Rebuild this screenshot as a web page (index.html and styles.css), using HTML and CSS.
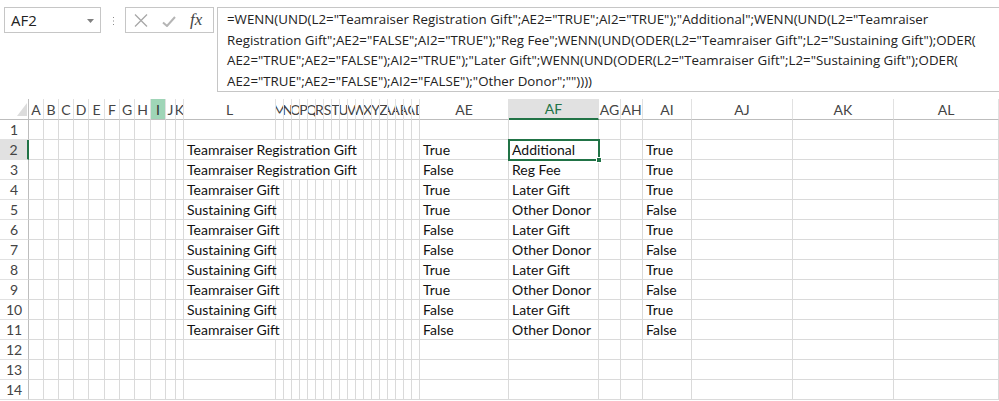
FILE: index.html
```html
<!DOCTYPE html>
<html><head><meta charset="utf-8"><title>Sheet</title><link rel="stylesheet" href="styles.css"></head>
<body>
<div class="fbar">
  <div class="namebox"><span>AF2</span><svg class="dd" width="7" height="4" viewBox="0 0 7 4"><path d="M0 0h7L3.5 4z" fill="#808080"/></svg></div>
  <svg class="dots" width="3" height="10" viewBox="0 0 3 10"><rect x="1" y="1" width="1" height="1" fill="#8a8a8a"/><rect x="1" y="4.5" width="1" height="1" fill="#8a8a8a"/><rect x="1" y="8" width="1" height="1" fill="#8a8a8a"/></svg>
  <div class="btns">
    <svg class="bx" width="14" height="13" viewBox="0 0 14 13"><path d="M1 0.5L13 12.5M13 0.5L1 12.5" stroke="#a8a8a8" stroke-width="1.3" fill="none"/></svg>
    <svg class="bc" width="14" height="11" viewBox="0 0 14 11"><path d="M1 6.5L5 10L13 1" stroke="#b5b5b5" stroke-width="2" fill="none"/></svg>
    <span class="fx">fx</span>
  </div>
  <div class="formula">
    <div>=WENN(UND(L2="Teamraiser Registration Gift";AE2="TRUE";AI2="TRUE");"Additional";WENN(UND(L2="Teamraiser</div>
    <div>Registration Gift";AE2="FALSE";AI2="TRUE");"Reg Fee";WENN(UND(ODER(L2="Teamraiser Gift";L2="Sustaining Gift");ODER(</div>
    <div>AE2="TRUE";AE2="FALSE");AI2="TRUE");"Later Gift";WENN(UND(ODER(L2="Teamraiser Gift";L2="Sustaining Gift");ODER(</div>
    <div>AE2="TRUE";AE2="FALSE");AI2="FALSE");"Other Donor";""))))</div>
  </div>
</div>
<table class="sheet">
<colgroup>
<col class="w29"><col class="w15"><col class="w15"><col class="w15"><col class="w15"><col class="w16"><col class="w15"><col class="w15"><col class="w16"><col class="w15"><col class="w10"><col class="w8"><col class="w92">
<col class="w8"><col class="w8"><col class="w8"><col class="w8"><col class="w8"><col class="w8"><col class="w8"><col class="w8"><col class="w8"><col class="w8"><col class="w8"><col class="w8"><col class="w8"><col class="w8"><col class="w8"><col class="w8"><col class="w8"><col class="w8">
<col class="w89"><col class="w90"><col class="w22"><col class="w22"><col class="w49"><col class="w101"><col class="w101"><col class="w105">
</colgroup>
<thead>
<tr class="hdr"><th class="corner"><svg class="tri" width="10" height="13" viewBox="0 0 10 13"><path d="M10 0V13H0z" fill="#dcdcdc"/></svg></th>
<th class="ch">A</th><th class="ch">B</th><th class="ch">C</th><th class="ch">D</th><th class="ch">E</th><th class="ch">F</th><th class="ch">G</th><th class="ch">H</th><th class="ch hi">I</th><th class="ch">J</th><th class="ch"><div class="clip">K</div></th><th class="ch">L</th>
<th class="ch"><div class="clip">M</div></th><th class="ch"><div class="clip">N</div></th><th class="ch"><div class="clip">O</div></th><th class="ch"><div class="clip">P</div></th><th class="ch"><div class="clip">Q</div></th><th class="ch"><div class="clip">R</div></th><th class="ch"><div class="clip">S</div></th><th class="ch"><div class="clip">T</div></th><th class="ch"><div class="clip">U</div></th><th class="ch"><div class="clip">V</div></th><th class="ch"><div class="clip">W</div></th><th class="ch"><div class="clip">X</div></th><th class="ch"><div class="clip">Y</div></th><th class="ch"><div class="clip">Z</div></th><th class="ch"><div class="clip">AA</div></th><th class="ch"><div class="clip">AB</div></th><th class="ch"><div class="clip">AC</div></th><th class="ch"><div class="clip">AD</div></th>
<th class="ch">AE</th><th class="ch sel">AF</th><th class="ch">AG</th><th class="ch">AH</th><th class="ch">AI</th><th class="ch">AJ</th><th class="ch">AK</th><th class="ch">AL</th></tr>
</thead>
<tbody>
<tr><th class="rh">1</th><td></td><td></td><td></td><td></td><td></td><td></td><td></td><td></td><td></td><td></td><td></td><td></td><td></td><td></td><td></td><td></td><td></td><td></td><td></td><td></td><td></td><td></td><td></td><td></td><td></td><td></td><td></td><td></td><td></td><td></td><td></td><td></td><td></td><td></td><td></td><td></td><td></td><td></td></tr>
<tr><th class="rh on">2</th><td></td><td></td><td></td><td></td><td></td><td></td><td></td><td></td><td></td><td></td><td></td><td class="t" colspan="12">Teamraiser Registration Gift</td><td></td><td></td><td></td><td></td><td></td><td></td><td></td><td class="t">True</td><td class="t cur">Additional<div class="selbox"></div><div class="handle"></div></td><td></td><td></td><td class="t">True</td><td></td><td></td><td></td></tr>
<tr><th class="rh">3</th><td></td><td></td><td></td><td></td><td></td><td></td><td></td><td></td><td></td><td></td><td></td><td class="t" colspan="12">Teamraiser Registration Gift</td><td></td><td></td><td></td><td></td><td></td><td></td><td></td><td class="t">False</td><td class="t">Reg Fee</td><td></td><td></td><td class="t">True</td><td></td><td></td><td></td></tr>
<tr><th class="rh">4</th><td></td><td></td><td></td><td></td><td></td><td></td><td></td><td></td><td></td><td></td><td></td><td class="t" colspan="2">Teamraiser Gift</td><td></td><td></td><td></td><td></td><td></td><td></td><td></td><td></td><td></td><td></td><td></td><td></td><td></td><td></td><td></td><td></td><td></td><td class="t">True</td><td class="t">Later Gift</td><td></td><td></td><td class="t">True</td><td></td><td></td><td></td></tr>
<tr><th class="rh">5</th><td></td><td></td><td></td><td></td><td></td><td></td><td></td><td></td><td></td><td></td><td></td><td class="t">Sustaining Gift</td><td></td><td></td><td></td><td></td><td></td><td></td><td></td><td></td><td></td><td></td><td></td><td></td><td></td><td></td><td></td><td></td><td></td><td></td><td class="t">True</td><td class="t">Other Donor</td><td></td><td></td><td class="t">False</td><td></td><td></td><td></td></tr>
<tr><th class="rh">6</th><td></td><td></td><td></td><td></td><td></td><td></td><td></td><td></td><td></td><td></td><td></td><td class="t" colspan="2">Teamraiser Gift</td><td></td><td></td><td></td><td></td><td></td><td></td><td></td><td></td><td></td><td></td><td></td><td></td><td></td><td></td><td></td><td></td><td></td><td class="t">False</td><td class="t">Later Gift</td><td></td><td></td><td class="t">True</td><td></td><td></td><td></td></tr>
<tr><th class="rh">7</th><td></td><td></td><td></td><td></td><td></td><td></td><td></td><td></td><td></td><td></td><td></td><td class="t">Sustaining Gift</td><td></td><td></td><td></td><td></td><td></td><td></td><td></td><td></td><td></td><td></td><td></td><td></td><td></td><td></td><td></td><td></td><td></td><td></td><td class="t">False</td><td class="t">Other Donor</td><td></td><td></td><td class="t">False</td><td></td><td></td><td></td></tr>
<tr><th class="rh">8</th><td></td><td></td><td></td><td></td><td></td><td></td><td></td><td></td><td></td><td></td><td></td><td class="t">Sustaining Gift</td><td></td><td></td><td></td><td></td><td></td><td></td><td></td><td></td><td></td><td></td><td></td><td></td><td></td><td></td><td></td><td></td><td></td><td></td><td class="t">True</td><td class="t">Later Gift</td><td></td><td></td><td class="t">True</td><td></td><td></td><td></td></tr>
<tr><th class="rh">9</th><td></td><td></td><td></td><td></td><td></td><td></td><td></td><td></td><td></td><td></td><td></td><td class="t" colspan="2">Teamraiser Gift</td><td></td><td></td><td></td><td></td><td></td><td></td><td></td><td></td><td></td><td></td><td></td><td></td><td></td><td></td><td></td><td></td><td></td><td class="t">True</td><td class="t">Other Donor</td><td></td><td></td><td class="t">False</td><td></td><td></td><td></td></tr>
<tr><th class="rh">10</th><td></td><td></td><td></td><td></td><td></td><td></td><td></td><td></td><td></td><td></td><td></td><td class="t">Sustaining Gift</td><td></td><td></td><td></td><td></td><td></td><td></td><td></td><td></td><td></td><td></td><td></td><td></td><td></td><td></td><td></td><td></td><td></td><td></td><td class="t">False</td><td class="t">Later Gift</td><td></td><td></td><td class="t">True</td><td></td><td></td><td></td></tr>
<tr><th class="rh">11</th><td></td><td></td><td></td><td></td><td></td><td></td><td></td><td></td><td></td><td></td><td></td><td class="t" colspan="2">Teamraiser Gift</td><td></td><td></td><td></td><td></td><td></td><td></td><td></td><td></td><td></td><td></td><td></td><td></td><td></td><td></td><td></td><td></td><td></td><td class="t">False</td><td class="t">Other Donor</td><td></td><td></td><td class="t">False</td><td></td><td></td><td></td></tr>
<tr><th class="rh">12</th><td></td><td></td><td></td><td></td><td></td><td></td><td></td><td></td><td></td><td></td><td></td><td></td><td></td><td></td><td></td><td></td><td></td><td></td><td></td><td></td><td></td><td></td><td></td><td></td><td></td><td></td><td></td><td></td><td></td><td></td><td></td><td></td><td></td><td></td><td></td><td></td><td></td><td></td></tr>
<tr><th class="rh">13</th><td></td><td></td><td></td><td></td><td></td><td></td><td></td><td></td><td></td><td></td><td></td><td></td><td></td><td></td><td></td><td></td><td></td><td></td><td></td><td></td><td></td><td></td><td></td><td></td><td></td><td></td><td></td><td></td><td></td><td></td><td></td><td></td><td></td><td></td><td></td><td></td><td></td><td></td></tr>
<tr><th class="rh">14</th><td></td><td></td><td></td><td></td><td></td><td></td><td></td><td></td><td></td><td></td><td></td><td></td><td></td><td></td><td></td><td></td><td></td><td></td><td></td><td></td><td></td><td></td><td></td><td></td><td></td><td></td><td></td><td></td><td></td><td></td><td></td><td></td><td></td><td></td><td></td><td></td><td></td><td></td></tr>
</tbody>
</table>
</body></html>
```
FILE: styles.css
```css
* { box-sizing: border-box; }
html, body { margin: 0; background: #fff; }
body { width: 999px; height: 401px; overflow: hidden; font-family: Lato, "Liberation Sans", sans-serif; color: #111; }

.fbar { display: flex; align-items: flex-start; height: 99px; padding-top: 7px; }
.namebox { margin-left: 4px; width: 97px; height: 26px; border: 1px solid #c6c6c6; display: flex; align-items: center; justify-content: space-between; padding: 0 6px 0 6px; font-family: "Open Sans", sans-serif; font-size: 15px; color: #222; }
.dd { margin-top: 1px; }
.dots { margin: 9px 0 0 11px; }
.btns { margin-left: 10px; width: 89px; height: 26px; border: 1px solid #c6c6c6; display: flex; align-items: center; padding-left: 8px; }
.bx { margin-top: 1px; }
.bc { margin: 2px 0 0 14px; }
.fx { margin-left: 14px; font-family: "Liberation Serif", serif; font-style: italic; font-size: 17px; color: #444; line-height: 1; margin-top: -2px; }
.formula { margin-left: 3px; flex: 1; height: 85px; border: 1px solid #c6c6c6; border-right: 0; padding: 1px 0 0 9px; font-family: "Open Sans", sans-serif; font-size: 13.3px; line-height: 20.5px; color: #222; white-space: nowrap; overflow: hidden; }

.sheet { border-collapse: separate; border-spacing: 0; table-layout: fixed; width: 999px; }
.w29 { width: 29px; } .w15 { width: 15px; } .w16 { width: 16px; } .w10 { width: 10px; } .w8 { width: 8px; }
.w92 { width: 92px; } .w89 { width: 89px; } .w90 { width: 90px; } .w22 { width: 22px; } .w49 { width: 49px; }
.w101 { width: 101px; } .w105 { width: 105px; }

.sheet td, .sheet th { padding: 0; height: 20px; border-right: 1px solid #dadada; border-bottom: 1px solid #dadada; white-space: nowrap; overflow: hidden; font-weight: normal; font-size: 14px; line-height: 19px; vertical-align: middle; }
.sheet .t { padding: 1px 0 0 3px; line-height: 18px; text-align: left; overflow: visible; color: #111; }

.hdr th { height: 21px; color: #444; text-align: center; background: #fff; border-right-color: #e1e1e1; border-bottom-color: #bdbdbd; }
.hdr .corner { vertical-align: top; border-right-color: #bdbdbd; }
.tri { display: block; margin: 4px 0 0 17px; }
.clip { display: flex; justify-content: center; width: 7px; overflow: hidden; }
.hdr .hi { background: #9fd5b7; color: #333; }
.hdr .sel { background: #e1e1e1; color: #217346; border-bottom: 2px solid #217346; }

.rh { text-align: center; color: #444; border-right-color: #bdbdbd !important; border-bottom-color: #e1e1e1 !important; }
.rh.on { background: #e1e1e1; border-right: 2px solid #217346 !important; }

.cur { position: relative; }
.selbox { position: absolute; left: -1px; top: -1px; width: 92px; height: 22px; border: 2px solid #217346; }
.handle { position: absolute; right: -4px; bottom: -4px; width: 6px; height: 6px; background: #217346; border: 1px solid #fff; }
```
